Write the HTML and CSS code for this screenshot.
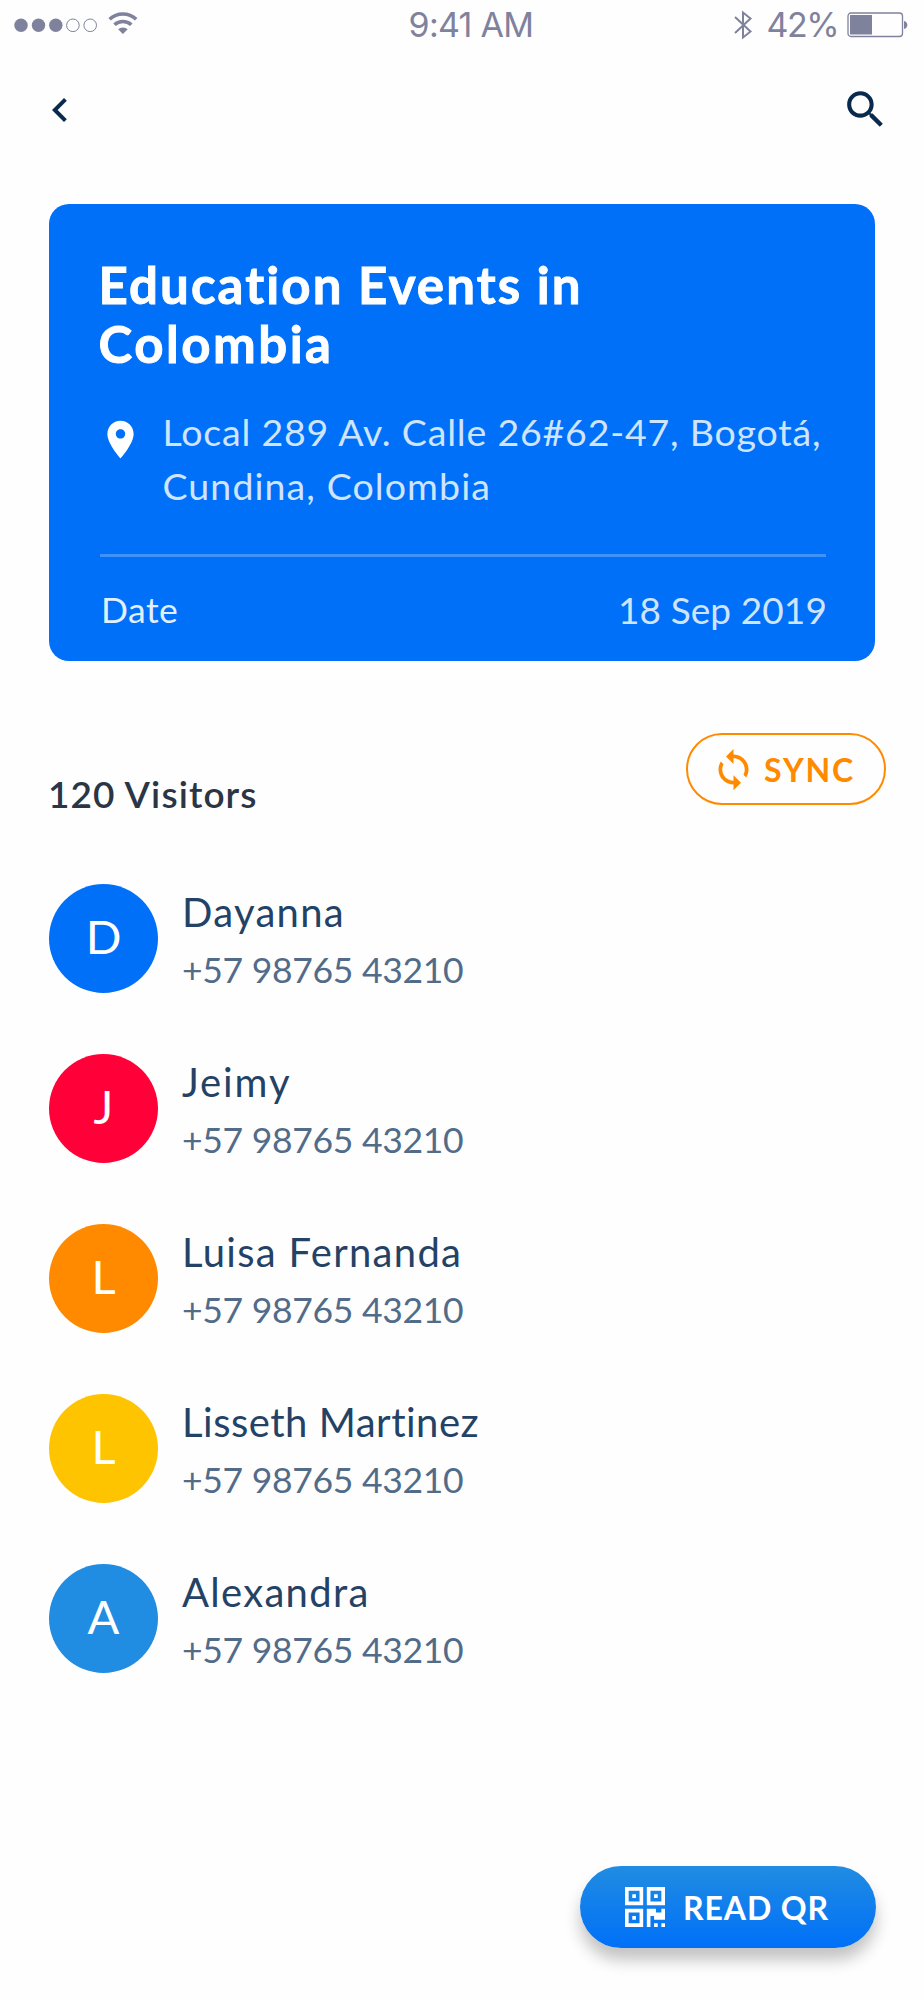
FILE: index.html
```html
<!DOCTYPE html>
<html lang="en">
<head>
<meta charset="utf-8">
<title>Education Events in Colombia</title>
<link rel="stylesheet" href="styles.css">
</head>
<body>
<div class="status">
  <svg class="signal" width="126" height="28" viewBox="0 0 126 28" fill="#7f829d">
    <circle cx="7" cy="14.3" r="6.7"/><circle cx="24.5" cy="14.3" r="6.7"/><circle cx="41.8" cy="14.3" r="6.7"/>
    <g fill="none" stroke="#7f829d" stroke-width="1"><circle cx="58.9" cy="14.3" r="6.3"/><circle cx="76.2" cy="14.3" r="6.3"/></g>
    <g fill="none" stroke="#7f829d" stroke-width="3.6"><path d="M95.600 8.200a19.500 19.500 0 0 1 26.600 0"/><path d="M100.500 13.800a12.400 12.400 0 0 1 16.800 0"/></g>
    <path d="M104.100 18.300a7 7 0 0 1 9.600 0l-4.800 4.800z"/>
  </svg>
  <span class="time">9:41 AM</span>
  <svg class="bluetooth" width="20" height="30" viewBox="0 0 20 30" fill="none" stroke="#7f829d" stroke-width="2"><path d="M2 7l15.500 14.500-7.500 6V2.500l7.500 6L2 23"/></svg>
  <span class="percent">42%</span>
  <svg class="battery" width="61" height="26" viewBox="0 0 61 26"><rect x="1" y="1" width="54.500" height="23.500" rx="3" fill="none" stroke="#7f829d" stroke-width="1.300"/><path fill="#7f829d" d="M3 3h22v19.500H3zM57 9c4.500 1 4.500 7 0 8z"/></svg>
</div>
<nav class="nav">
  <svg width="48" height="48" viewBox="0 0 24 24" fill="#0a2a4d"><path d="M15.410 7.410L14 6l-6 6 6 6 1.410-1.410L10.830 12z"/></svg>
  <svg class="search" width="49" height="49" viewBox="0 0 24 24" fill="#0a2a4d"><path d="M15.500 14h-.79l-.28-.27C15.410 12.590 16 11.110 16 9.500 16 5.910 13.090 3 9.500 3S3 5.910 3 9.500 5.910 16 9.500 16c1.610 0 3.090-.59 4.230-1.570l.27.28v.79l5 4.990L20.490 19l-4.990-5zm-6 0C7.010 14 5 11.990 5 9.500S7.010 5 9.500 5 14 7.010 14 9.500 11.990 14 9.500 14z"/></svg>
</nav>
<main>
  <section class="card">
    <h1 class="title">Education Events in<br><span class="title-end">Colombia</span></h1>
    <div class="place">
      <svg class="pin" width="45" height="45" viewBox="0 0 24 24" fill="#fff"><path d="M12 2C8.130 2 5 5.130 5 9c0 5.250 7 13 7 13s7-7.750 7-13c0-3.870-3.130-7-7-7zm0 9.500c-1.380 0-2.500-1.120-2.500-2.500s1.120-2.500 2.500-2.500 2.500 1.120 2.500 2.500-1.120 2.500-2.500 2.500z"/></svg>
      <p class="address"><span class="line1">Local 289 Av. Calle 26#62-47, Bogotá,</span><br><span class="line2">Cundina, Colombia</span></p>
    </div>
    <div class="date-row"><span class="date-label">Date</span><span class="date-value">18 Sep 2019</span></div>
  </section>
  <div class="list-head">
    <h2 class="count">120 Visitors</h2>
    <button class="sync"><svg width="45" height="45" viewBox="0 0 24 24" fill="#ff8a00"><path d="M12 4V1L8 5l4 4V6c3.310 0 6 2.690 6 6 0 1.010-.25 1.970-.7 2.800l1.460 1.460C19.540 15.030 20 13.570 20 12c0-4.420-3.580-8-8-8zm0 14c-3.310 0-6-2.690-6-6 0-1.010.25-1.970.7-2.800L5.240 7.740C4.460 8.970 4 10.430 4 12c0 4.420 3.580 8 8 8v3l4-4-4-4v3z"/></svg><span>SYNC</span></button>
  </div>
  <ul class="visitors">
    <li class="visitor"><span class="avatar blue">D</span><div class="info"><div class="name">Dayanna</div><div class="phone">+57 98765 43210</div></div></li>
    <li class="visitor"><span class="avatar red">J</span><div class="info"><div class="name loose">Jeimy</div><div class="phone">+57 98765 43210</div></div></li>
    <li class="visitor"><span class="avatar orange">L</span><div class="info"><div class="name">Luisa Fernanda</div><div class="phone">+57 98765 43210</div></div></li>
    <li class="visitor"><span class="avatar yellow">L</span><div class="info"><div class="name tight">Lisseth Martinez</div><div class="phone">+57 98765 43210</div></div></li>
    <li class="visitor"><span class="avatar sky">A</span><div class="info"><div class="name">Alexandra</div><div class="phone">+57 98765 43210</div></div></li>
  </ul>
  <button class="read"><svg width="40" height="40" viewBox="0 0 22 22" fill="#fff"><path fill-rule="evenodd" d="M0 0h10v10H0zM2 2v6h6V2zM4 4h2v2H4zM12 0h10v10H12zM14 2v6h6V2zM16 4h2v2h-2zM0 12h10v10H0zM2 14v6h6v-6zM4 16h2v2H4zM12 12h5v2h3v-2h2v6h-6v-2h-2v6h-2zM16 20h2v2h-2zM20 20h2v2h-2z"/></svg><span>READ QR</span></button>
</main>
</body>
</html>
```

FILE: styles.css
```css
* { box-sizing: border-box; }
body { margin: 0; height: 2000px; background: #fefefe; font-family: Lato, "Open Sans", sans-serif; font-variant-ligatures: none; overflow: hidden; }
svg { display: block; flex: none; }
h1, h2, p, ul { margin: 0; padding: 0; }
span, .name, .phone { white-space: nowrap; }
button { font-family: inherit; display: flex; align-items: center; border: 0; padding: 0; }

.status { display: flex; height: 50px; padding-left: 14px; color: #7f829d; font: 400 34px/50px Inter, "Liberation Sans", sans-serif; }
.signal { margin-top: 11px; }
.time { margin-left: 268.5px; width: 126px; letter-spacing: -0.7px; }
.bluetooth { margin: 10px 0 0 198px; }
.percent { margin-left: 14px; width: 80px; letter-spacing: -1.5px; }
.battery { margin-top: 12px; }

.nav { display: flex; justify-content: space-between; height: 154px; padding: 36px 34px 0 36px; }
.search { margin-top: -1px; }

.card { margin: 0 49px; height: 457px; padding: 51px 49px 0 51px; border-radius: 20px; background: #0070f8; color: #fff; }
.title { margin-left: -1.5px; font-size: 51px; line-height: 59px; font-weight: 700; letter-spacing: 2.1px; -webkit-text-stroke: 0.9px #fff; }
.title-end { letter-spacing: 2.5px; }
.place { display: flex; margin-top: 32px; }
.pin { margin: 12px 0 0 -2px; }
.address { margin-left: 19.5px; font-size: 37.5px; line-height: 54px; color: #cfe4fd; }
.line1 { letter-spacing: 0.8px; }
.line2 { letter-spacing: 1.1px; }
.date-row { display: flex; justify-content: space-between; margin-top: 41px; padding-top: 31px; border-top: 3px solid #3f92f8; line-height: 44px; }
.date-label { margin-left: 1px; font-size: 35.5px; letter-spacing: 0.5px; color: #e2effe; }
.date-value { margin-right: -1px; font-size: 37px; letter-spacing: 0.1px; color: #cfe4fd; }

.list-head { display: flex; justify-content: space-between; height: 223px; padding: 72px 38px 0 48px; }
.count { margin-top: 39px; font-size: 37px; line-height: 44px; font-weight: 600; letter-spacing: 1.1px; color: #2b3545; }
.sync { width: 200px; height: 72px; padding-left: 23px; gap: 8px; border: 2px solid #ff8a00; border-radius: 36px; background: transparent; color: #ff8a00; font-size: 32px; font-weight: 700; letter-spacing: 1.9px; }

.visitors { display: grid; gap: 61px; list-style: none; padding-left: 49px; }
.visitor { display: flex; height: 109px; }
.avatar { display: flex; align-items: center; justify-content: center; width: 109px; height: 109px; padding-bottom: 6px; border-radius: 50%; font-size: 47px; color: #fff; }
.blue { background: #0070f8; }
.red { background: #ff0038; }
.orange { background: #ff8a00; }
.yellow { background: #ffc400; }
.sky { background: #208ce2; }
.info { padding: 4px 0 0 24px; }
.name { font-size: 40px; line-height: 48px; letter-spacing: 1.3px; color: #244266; }
.loose { letter-spacing: 1.9px; }
.tight { letter-spacing: 0.5px; }
.phone { margin-top: 13px; font-size: 35.5px; line-height: 42px; letter-spacing: -0.3px; color: #526b89; }

.read { width: 296px; height: 82px; margin: 193px 48px 0 auto; padding-left: 45px; gap: 18px; border-radius: 41px; background: linear-gradient(#208ce2, #0070f8); box-shadow: 0 12px 16px rgba(0, 0, 0, .24); color: #fff; font-size: 32px; font-weight: 700; letter-spacing: 0.9px; }
```
